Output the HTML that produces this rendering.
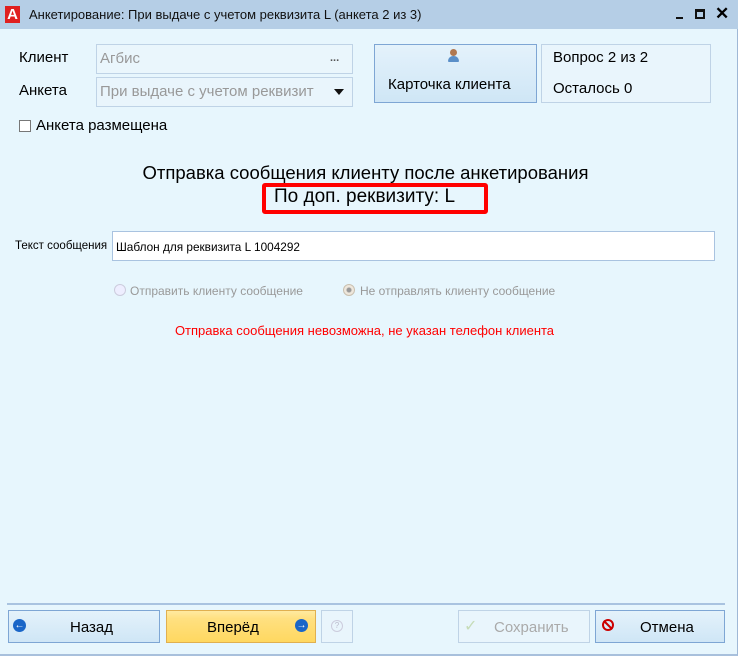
<!DOCTYPE html>
<html><head><meta charset="utf-8"><style>
*{box-sizing:border-box;margin:0;padding:0}
body{width:741px;height:664px;background:#fff;font-family:"Liberation Sans",sans-serif;position:relative;overflow:hidden;color:#000}
.win{position:absolute;left:0;top:0;width:738px;height:656px;background:#e7f6fd;border-right:1px solid #9fb8d6;border-bottom:2px solid #a8c0dc}
.title{position:absolute;left:0;top:0;width:738px;height:29px;background:#b5cee6}
.a{position:absolute}
.t{white-space:nowrap}
.box{position:absolute;border:1px solid #bfd3e6;background:#e9f5fc}
.btn{position:absolute;border:1px solid #7ea6d4;background:linear-gradient(#e4f2fb,#cfe6f6);text-align:center;font-size:15px}
</style></head><body>
<div class="win">
<div class="title">
 <div class="a" style="left:5px;top:6px;width:15px;height:17px;background:#e02020;color:#fff;font-weight:bold;font-size:15px;line-height:17px;text-align:center">A</div>
 <div class="a t" style="left:29px;top:7px;font-size:13px;color:#111">Анкетирование: При выдаче с учетом реквизита L (анкета 2 из 3)</div>
 <div class="a" style="left:676px;top:17px;width:7px;height:2px;background:#111"></div>
 <div class="a" style="left:695px;top:9px;width:10px;height:10px;border:2px solid #111;border-top-width:3px"></div>
 <div class="a t" style="left:715px;top:4px;font-size:17px;font-weight:bold">✕</div>
</div>
<div class="a t" style="left:19px;top:49px;font-size:15px">Клиент</div>
<div class="a t" style="left:19px;top:82px;font-size:15px">Анкета</div>
<div class="box" style="left:96px;top:44px;width:257px;height:30px;background:#eaf6fc"></div>
<div class="a t" style="left:100px;top:50px;font-size:15px;color:#999">Агбис</div>
<div class="a t" style="left:330px;top:52px;font-size:11px;color:#555;font-weight:bold">...</div>
<div class="box" style="left:96px;top:77px;width:257px;height:30px"></div>
<div class="a t" style="left:100px;top:83px;font-size:15px;color:#999">При выдаче с учетом реквизит</div>
<div class="a" style="left:334px;top:89px;border-left:5px solid transparent;border-right:5px solid transparent;border-top:6px solid #111"></div>
<div class="a" style="left:19px;top:120px;width:12px;height:12px;border:1px solid #777;background:#fff"></div>
<div class="a t" style="left:36px;top:117px;font-size:15px">Анкета размещена</div>
<div class="btn" style="left:374px;top:44px;width:163px;height:59px"></div>
<div class="a" style="left:450px;top:49px;width:7px;height:7px;border-radius:50%;background:#b07850"></div>
<div class="a" style="left:448px;top:56px;width:11px;height:6px;border-radius:5px 5px 1px 1px;background:#5a8fc8"></div>
<div class="a t" style="left:388px;top:76px;font-size:15px">Карточка клиента</div>
<div class="box" style="left:541px;top:44px;width:170px;height:59px"></div>
<div class="a t" style="left:553px;top:49px;font-size:15px">Вопрос 2 из 2</div>
<div class="a t" style="left:553px;top:80px;font-size:15px">Осталось 0</div>
<div class="a t" style="left:0;width:731px;text-align:center;top:162px;font-size:18.5px">Отправка сообщения клиенту после анкетирования</div>
<div class="a" style="left:262px;top:183px;width:226px;height:31px;border:4px solid #f00;border-radius:3px"></div>
<div class="a t" style="left:274px;top:186px;font-size:19px">По доп. реквизиту: L</div>
<div class="a t" style="left:15px;top:240px;font-size:11.5px">Текст сообщения</div>
<div class="a" style="left:112px;top:231px;width:603px;height:30px;border:1px solid #a9c3e0;background:#fff"></div>
<div class="a t" style="left:116px;top:240px;font-size:11.8px">Шаблон для реквизита L 1004292</div>
<div class="a" style="left:114px;top:284px;width:12px;height:12px;border-radius:50%;border:1px solid #ccd;background:#eef"></div>
<div class="a t" style="left:130px;top:284px;font-size:12px;color:#999">Отправить клиенту сообщение</div>
<div class="a" style="left:343px;top:284px;width:12px;height:12px;border-radius:50%;border:1px solid #c9c0b0;background:radial-gradient(#999 2px,#eee7dc 3px)"></div>
<div class="a t" style="left:360px;top:284px;font-size:12px;color:#999">Не отправлять клиенту сообщение</div>
<div class="a t" style="left:0;width:729px;text-align:center;top:323px;font-size:13px;color:#f00">Отправка сообщения невозможна, не указан телефон клиента</div>
<div class="a" style="left:7px;top:603px;width:718px;height:2px;border-top:1px solid #a9c3e0;border-bottom:1px solid #a9c3e0"></div>
<div class="btn" style="left:8px;top:610px;width:152px;height:33px"></div>
<div class="a" style="left:13px;top:619px;width:13px;height:13px;border-radius:50%;background:#1a66c8;color:#fff;font-size:10px;line-height:13px;text-align:center;font-weight:bold">←</div>
<div class="a t" style="left:70px;top:619px;font-size:15px">Назад</div>
<div class="btn" style="left:166px;top:610px;width:150px;height:33px;border-color:#e0b050;background:linear-gradient(#ffeaa0 0,#ffe080 25%,#ffd860)"></div>
<div class="a t" style="left:207px;top:619px;font-size:15px">Вперёд</div>
<div class="a" style="left:295px;top:619px;width:13px;height:13px;border-radius:50%;background:#1a66c8;color:#fff;font-size:10px;line-height:13px;text-align:center;font-weight:bold">→</div>
<div class="box" style="left:321px;top:610px;width:32px;height:33px"></div>
<div class="a" style="left:331px;top:620px;width:12px;height:12px;border-radius:50%;border:1px solid #ccd;font-size:8px;color:#bbc;text-align:center;line-height:10px">?</div>
<div class="box" style="left:458px;top:610px;width:132px;height:33px"></div>
<div class="a t" style="left:464px;top:616px;font-size:16px;color:#c6dcb8">✓</div>
<div class="a t" style="left:494px;top:619px;font-size:15px;color:#aaa">Сохранить</div>
<div class="btn" style="left:595px;top:610px;width:130px;height:33px"></div>
<div class="a" style="left:602px;top:619px;width:12px;height:12px;border-radius:50%;border:2px solid #c00"></div>
<div class="a" style="left:607px;top:619px;width:2px;height:12px;background:#c00;transform:rotate(-45deg)"></div>
<div class="a t" style="left:640px;top:619px;font-size:15px">Отмена</div>
</div>
</body></html>
